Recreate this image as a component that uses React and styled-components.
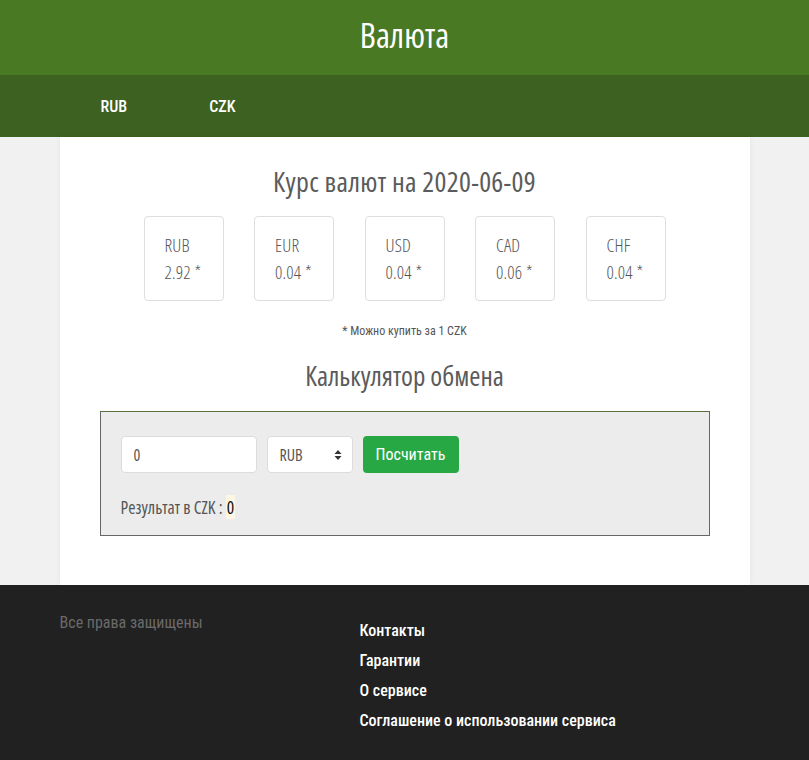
import styled, { createGlobalStyle } from "styled-components";

const GlobalStyle = createGlobalStyle`
  body {
    margin: 0;
    background: #f1f1f1;
    font-family: "Open Sans", sans-serif;
    font-stretch: 75%;
    color: #555;
  }
  * { box-sizing: border-box; }
`;

const Header = styled.header`
  height: 75px;
  background: #4a7923;
  display: flex;
  align-items: center;
  justify-content: center;
  padding-bottom: 6px;
  h1 {
    margin: 0;
    color: #fff;
    font-size: 34px;
    line-height: 40px;
    font-weight: 400;
  }
`;

const Nav = styled.nav`
  height: 62px;
  background: #3d6120;
  ul {
    display: flex;
    align-items: center;
    height: 100%;
    width: 690px;
    margin: 0 auto;
    padding: 0;
    list-style: none;
  }
  li {
    padding: 0 41px;
    color: #fff;
    font-family: "Roboto", sans-serif;
    font-stretch: 75%;
    font-size: 16px;
    font-weight: 500;
  }
`;

const Main = styled.main`
  width: 690px;
  margin: 0 auto;
  background: #fff;
  padding: 26px 0 49px;
  box-shadow: 0 0 6px rgba(0, 0, 0, 0.06);
`;

const Title = styled.h2`
  margin: 0;
  text-align: center;
  font-size: ${(p) => p.$size || 27}px;
  letter-spacing: ${(p) => p.$spacing || 0}px;
  font-weight: 400;
  color: #5b5b5b;
  line-height: 36px;
`;

const Cards = styled.div`
  display: flex;
  justify-content: center;
  gap: 30.5px;
  margin-top: 17px;
`;

const Card = styled.div`
  width: 80px;
  height: 85px;
  border: 1px solid #dedede;
  border-radius: 4px;
  padding: 15px 0 0 20px;
  font-size: 18px;
  line-height: 27px;
  color: #555;
  font-weight: 300;
  letter-spacing: 0.2px;
`;

const Note = styled.p`
  margin: 23px 0 20px;
  text-align: center;
  font-family: "Roboto", sans-serif;
  font-stretch: 75%;
  font-size: 12px;
  color: #555;
`;

const CalcBox = styled.div`
  margin: 17px 40px 0;
  background: #ececec;
  border: 1px solid #666;
  border-top-color: #5a6e3c;
  padding: 24px 20px 16px;
`;

const Row = styled.div`
  display: flex;
  gap: 10px;
`;

const Input = styled.input`
  width: 136px;
  height: 37px;
  border: 1px solid #dcdcdc;
  border-radius: 4px;
  padding: 0 12px;
  font: inherit;
  font-size: 16px;
  color: #555;
  background: #fff;
`;

const Select = styled.div`
  width: 86px;
  height: 37px;
  border: 1px solid #dcdcdc;
  border-radius: 4px;
  background: #fff;
  display: flex;
  align-items: center;
  justify-content: space-between;
  padding: 0 10px 0 12px;
  font-size: 16px;
  color: #555;
`;

const Button = styled.button`
  width: 96px;
  height: 37px;
  border: none;
  border-radius: 4px;
  background: #28a745;
  color: #fff;
  font-family: "Roboto", sans-serif;
  font-stretch: 75%;
  font-size: 16px;
`;

const Result = styled.div`
  margin-top: 22px;
  font-size: 17.5px;
  line-height: 24px;
  color: #555;
  mark {
    background: #fdf7e3;
    color: #111;
    padding: 0 1px;
  }
`;

const Footer = styled.footer`
  background: #212121;
  padding: 28px 0 30px;
`;

const FooterInner = styled.div`
  width: 690px;
  margin: 0 auto;
  display: grid;
  grid-template-columns: 300px 1fr;
`;

const Rights = styled.div`
  color: #6a6a6a;
  font-family: "Roboto", sans-serif;
  font-stretch: 75%;
  font-size: 16px;
`;

const Links = styled.ul`
  margin: 3px 0 0;
  padding: 0;
  list-style: none;
  li {
    color: #fff;
    font-family: "Roboto", sans-serif;
    font-stretch: 75%;
    font-weight: 500;
    font-size: 16px;
    line-height: 30px;
  }
`;

const rates = [
  ["RUB", "2.92"],
  ["EUR", "0.04"],
  ["USD", "0.04"],
  ["CAD", "0.06"],
  ["CHF", "0.04"],
];

export default function App() {
  return (
    <>
      <GlobalStyle />
      <Header>
        <h1>Валюта</h1>
      </Header>
      <Nav>
        <ul>
          <li>RUB</li>
          <li>CZK</li>
        </ul>
      </Nav>
      <Main>
        <Title $size={28} $spacing={0.3}>
          Курс валют на 2020-06-09
        </Title>
        <Cards>
          {rates.map(([code, value]) => (
            <Card key={code}>
              {code}
              <br />
              {value} *
            </Card>
          ))}
        </Cards>
        <Note>* Можно купить за 1 CZK</Note>
        <Title>Калькулятор обмена</Title>
        <CalcBox>
          <Row>
            <Input defaultValue="0" />
            <Select>
              RUB
              <svg width="8" height="12" viewBox="0 0 8 12">
                <path d="M4 1 L7.5 5 H0.5 Z M4 11 L0.5 7 H7.5 Z" fill="#333" />
              </svg>
            </Select>
            <Button>Посчитать</Button>
          </Row>
          <Result>
            Результат в CZK : <mark>0</mark>
          </Result>
        </CalcBox>
      </Main>
      <Footer>
        <FooterInner>
          <Rights>Все права защищены</Rights>
          <Links>
            <li>Контакты</li>
            <li>Гарантии</li>
            <li>О сервисе</li>
            <li>Соглашение о использовании сервиса</li>
          </Links>
        </FooterInner>
      </Footer>
    </>
  );
}
